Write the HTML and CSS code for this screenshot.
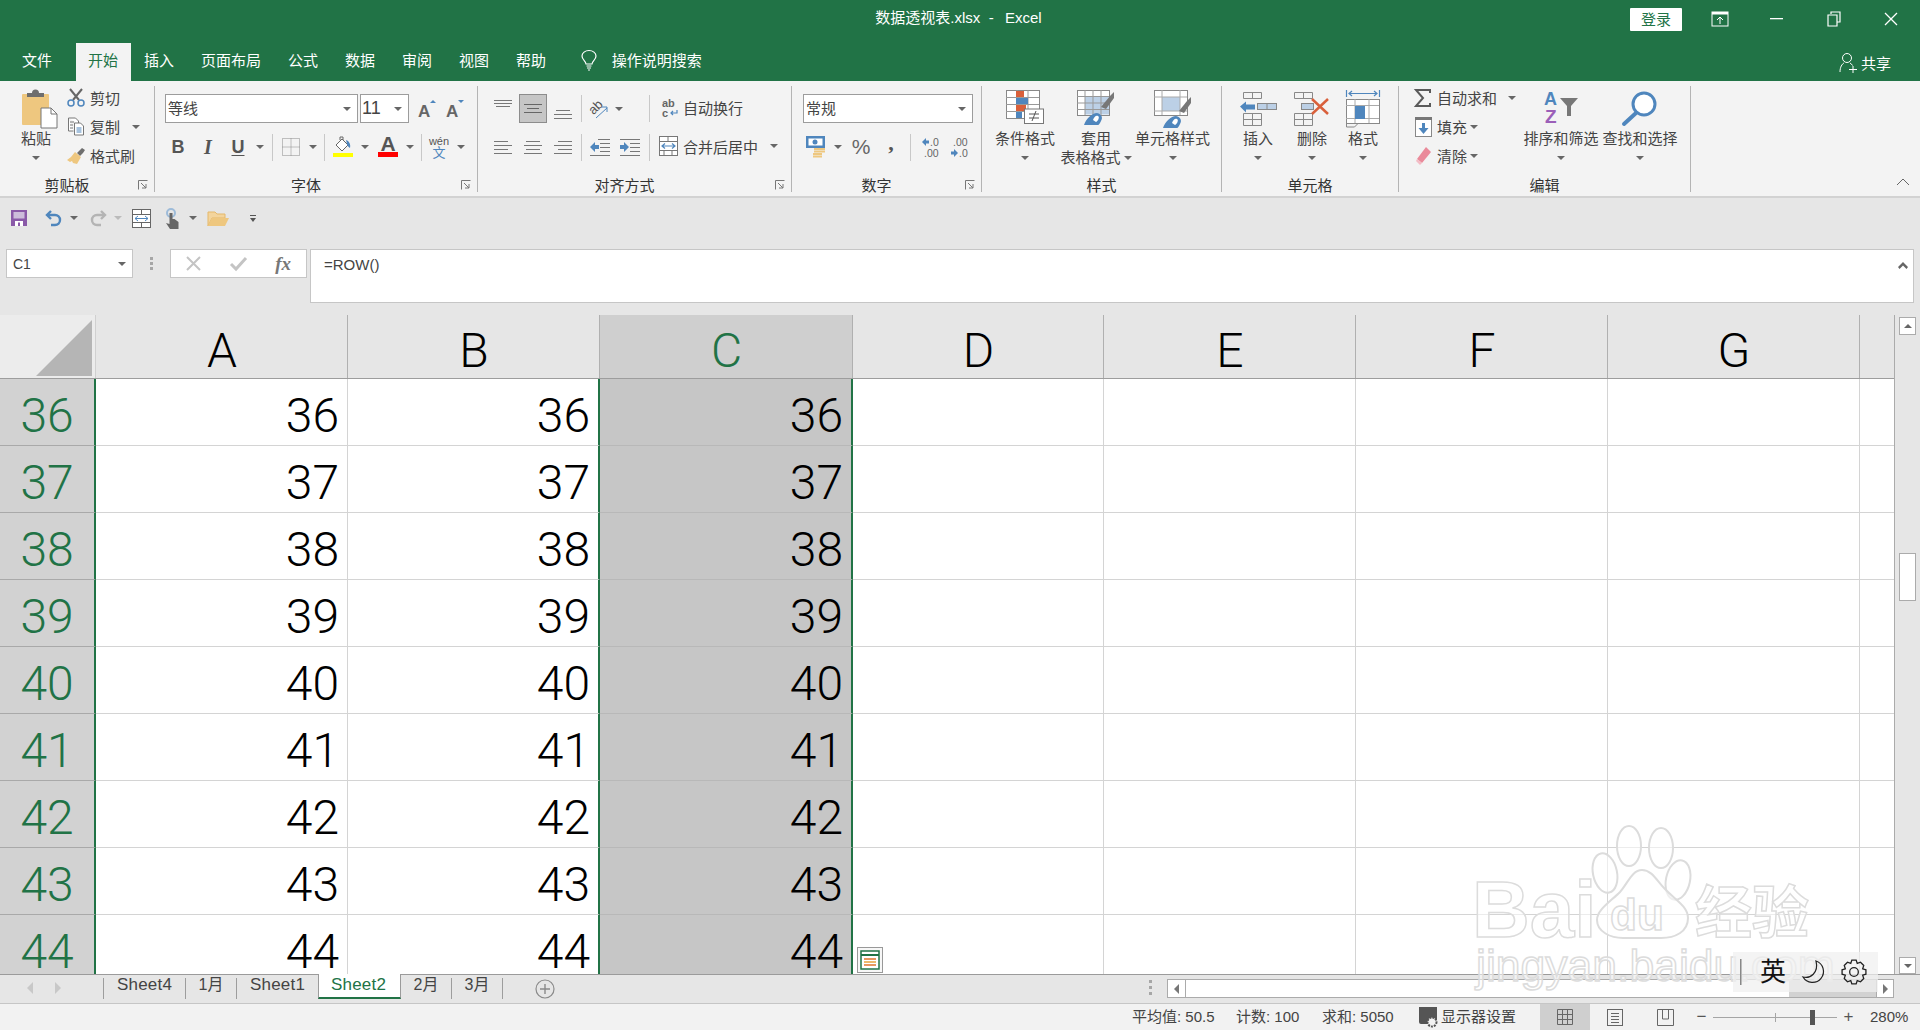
FILE: index.html
```html
<!DOCTYPE html>
<html lang="zh-CN">
<head>
<meta charset="utf-8">
<title>数据透视表.xlsx - Excel</title>
<link rel="stylesheet" href="styles.css">
</head>
<body>
<div class="app">
  <header class="titlebar">
    <div class="title">数据透视表.xlsx&nbsp; - &nbsp;&thinsp;Excel</div>
    <div class="winctl">
      <div class="login">登录</div>
      <div class="winbtn"><svg width="18" height="16"><rect x="1" y="1" width="16" height="14" fill="none" stroke="#fff"/><rect x="1" y="1" width="16" height="2.5" fill="#fff"/><path d="M9 13V6M6 9l3-3 3 3" fill="none" stroke="#fff"/></svg></div>
      <div class="winbtn"><svg width="14" height="4"><rect y="1" width="13" height="1.3" fill="#fff"/></svg></div>
      <div class="winbtn"><svg width="14" height="16"><path d="M4 3V1h9v10h-3M1 4h9v11H1z" fill="none" stroke="#fff" stroke-width="1.2"/></svg></div>
      <div class="winbtn"><svg width="14" height="14"><path d="M1 1l12 12M13 1L1 13" stroke="#fff" stroke-width="1.3"/></svg></div>
    </div>
  </header>
  <nav class="tabs">
    <div class="tab tab-file">文件</div>
    <div class="tab tab-active">开始</div>
    <div class="tab">插入</div>
    <div class="tab">页面布局</div>
    <div class="tab">公式</div>
    <div class="tab">数据</div>
    <div class="tab">审阅</div>
    <div class="tab">视图</div>
    <div class="tab">帮助</div>
    <div class="bulb"><svg width="16" height="21"><path d="M5 14c0-3-4-4-4-8a7 5.5 0 0 1 14 0c0 4-4 5-4 8z" fill="none" stroke="#fff" stroke-width="1.2"/><path d="M5.5 16h5M6 18h4M7 20h2" stroke="#fff"/></svg></div>
    <div class="tell">操作说明搜索</div>
    <div class="share"><svg width="19" height="21"><circle cx="8" cy="6" r="4.5" fill="none" stroke="#fff"/><path d="M1 20c0-5 2-8 4-9M11 11c1 .5 2 1.500 2.500 2.500M14 14v7M10 17.500h8" fill="none" stroke="#fff"/></svg><span>共享</span></div>
  </nav>

  <section class="ribbon">
    <!-- clipboard -->
    <div class="group g-clip">
      <div class="gbody">
        <div class="big w48 ml12">
          <div class="bigicon paste-ic"><svg width="34" height="38"><rect x="0" y="4" width="27" height="31" rx="1" fill="#eec77f"/><path d="M5 7V3h5a3 3 0 0 1 7 0h5v4z" fill="#6e6e6e"/><path d="M19 18h10l6 6v14H19z" fill="#fff" stroke="#777"/><path d="M29 18v6h6" fill="none" stroke="#777"/></svg></div>
          <div class="bt">粘贴</div>
          <div class="bt"><i class="caret"></i></div>
        </div>
        <div class="stack ml7">
          <div class="srow"><span class="sic"><svg width="18" height="19"><path d="M3 1l9 11M15 1L6 12" stroke="#666" stroke-width="2"/><circle cx="4" cy="15" r="3" fill="none" stroke="#4f86bd" stroke-width="1.500"/><circle cx="14" cy="15" r="3" fill="none" stroke="#4f86bd" stroke-width="1.500"/></svg></span>剪切</div>
          <div class="srow"><span class="sic"><svg width="18" height="19"><path d="M1.500 1h7l3 3v3M1.500 1v13h5" fill="#fff" stroke="#777"/><path d="M7.500 6h6l3 3v9h-9z" fill="#fff" stroke="#777"/><path d="M3 5h4M3 8h3M3 11h3" stroke="#777"/><path d="M9.500 11h5M9.500 13h5M9.500 15h5" stroke="#4f86bd"/></svg></span>复制<span class="c ml11"><i class="caret"></i></span></div>
          <div class="srow"><span class="sic"><svg width="18" height="16"><path d="M10 5l2-2 3-3 3 2-2 3-3 3z" fill="#6e6e6e"/><path d="M8 4l6 5-4 7-4-1-1-2-2 1-3-2 4-3z" fill="#eec77f"/></svg></span>格式刷</div>
        </div>
      </div>
      <div class="glabel"><span class="gt">剪贴板</span><span class="launch"><svg width="10" height="10"><path d="M.500 9.500V.500h9M3 3l5 5M8 4v4H4" fill="none" stroke="#777"/></svg></span></div>
    </div>
    <!-- font -->
    <div class="group g-font">
      <div class="gbody col">
        <div class="row1 pl10">
          <div class="combo w193"><span>等线</span><i class="caret"></i></div>
          <div class="combo w49 ml2"><span class="num">11</span><i class="caret"></i></div>
          <div class="cell w28 ml3"><svg width="22" height="22"><text x="3" y="19" class="glyph-a">A</text><path d="M15 5l3-3 3 3z" fill="#4f86bd"/></svg></div>
          <div class="cell w28"><svg width="22" height="22"><text x="3" y="19" class="glyph-a">A</text><path d="M15 2h6l-3 3z" fill="#4f86bd"/></svg></div>
        </div>
        <div class="row2 pl8">
          <div class="cell w30 fmt fb">B</div>
          <div class="cell w30 fmt fi">I</div>
          <div class="cell w30 fmt fu">U</div>
          <span class="c ml2"><i class="caret"></i></span>
          <i class="sep ml7"></i>
          <div class="cell w34 ml1"><svg width="18" height="18"><rect x=".5" y=".5" width="17" height="17" fill="none" stroke="#888" stroke-dasharray="1 1"/><path d="M9 .5v17M.5 9h17" stroke="#888" stroke-dasharray="1 1"/></svg></div>
          <span class="c"><i class="caret"></i></span>
          <i class="sep ml6"></i>
          <div class="cell w34 ml1"><svg width="20" height="20"><path d="M3 8l6-6 6 6-6 6z" fill="#fff" stroke="#666"/><path d="M7 3V0h3v3" fill="none" stroke="#666"/><path d="M13 3c3 1 5 4 4 8-2-1-3-3-3-4z" fill="#4f86bd"/><rect y="16" width="20" height="4" fill="#ff0"/></svg></div>
          <span class="c"><i class="caret"></i></span>
          <div class="cell w34 ml1"><svg width="20" height="22"><text x="2.500" y="15" class="glyph-b">A</text><rect y="16" width="20" height="5" fill="#f00"/></svg></div>
          <span class="c"><i class="caret"></i></span>
          <i class="sep ml6"></i>
          <div class="cell w34"><div class="wen"><span class="wen1">wén</span><span class="wen2">文</span></div></div>
          <span class="c"><i class="caret"></i></span>
        </div>
      </div>
      <div class="glabel"><span class="gt">字体</span><span class="launch"><svg width="10" height="10"><path d="M.500 9.500V.500h9M3 3l5 5M8 4v4H4" fill="none" stroke="#777"/></svg></span></div>
    </div>
    <!-- alignment -->
    <div class="group g-align">
      <div class="gbody col">
        <div class="row1 pl14">
          <div class="cell w22"><svg width="18" height="29"><path d="M0 6.500h18M0 9.500h18M2 12.500h14" stroke="#777"/></svg></div>
          <div class="btn-on ml5"><svg width="18" height="12"><path d="M0 1.500h18M3 5.500h12M0 9.500h18" stroke="#666"/></svg></div>
          <div class="cell w22 ml5"><svg width="18" height="29"><path d="M2 16.500h14M0 20.500h18M0 24.500h18" stroke="#777"/></svg></div>
          <i class="sep ml7"></i>
          <div class="cell w30 ml2"><svg width="20" height="20"><text x="1" y="12" class="glyph-ab" transform="rotate(-45 8 10)">ab</text><path d="M7 19l11-10M13 8h5v5" fill="none" stroke="#4f86bd" stroke-width="1" /></svg></div>
          <span class="c"><i class="caret"></i></span>
          <i class="sep ml25"></i>
          <div class="srow2 ml9"><span class="sic24"><svg width="20" height="20"><text x="3" y="9" class="glyph-wrap">ab</text><text x="3" y="19" class="glyph-wrap">c</text><path d="M18 12v3h-6M14 13l-2 2 2 2" fill="none" stroke="#4f86bd" stroke-width="1.200"/></svg></span>自动换行</div>
        </div>
        <div class="row2 pl14">
          <div class="cell w22"><svg width="18" height="14"><path d="M0 1.500h14M0 5.500h18M0 9.500h14M0 13.500h18" stroke="#777"/></svg></div>
          <div class="cell w22 ml8"><svg width="18" height="14"><path d="M2 1.500h14M0 5.500h18M2 9.500h14M0 13.500h18" stroke="#777"/></svg></div>
          <div class="cell w22 ml8"><svg width="18" height="14"><path d="M4 1.500h14M0 5.500h18M4 9.500h14M0 13.500h18" stroke="#777"/></svg></div>
          <i class="sep ml7"></i>
          <div class="cell w20 ml8"><svg width="20" height="18"><path d="M8 1.500h12M10 5.500h10M10 9.500h10M10 13.500h10M0 17.500h20" stroke="#777"/><path d="M0 9l5-5v3h4v4H5v3z" fill="#4f86bd"/></svg></div>
          <div class="cell w20 ml10"><svg width="20" height="18"><path d="M0 1.500h20M10 5.500h10M10 9.500h10M10 13.500h10M0 17.500h20" stroke="#777"/><path d="M9 9L4 4v3H0v4h4v3z" fill="#4f86bd"/></svg></div>
          <i class="sep ml9"></i>
          <div class="srow2 ml9"><span class="sic24"><svg width="19" height="20"><rect x=".5" y=".5" width="18" height="19" fill="#fff" stroke="#777"/><path d="M0 5.500h18M0 14.500h18M9 0v5M5 14v5M13 14v5" stroke="#777"/><path d="M3 10h13M6 7.500L3 10l3 2.500M13 7.500l3 2.500-3 2.500" fill="none" stroke="#4f86bd" stroke-width="1.200"/></svg></span>合并后居中<span class="c ml11"><i class="caret"></i></span></div>
        </div>
      </div>
      <div class="glabel"><span class="gt">对齐方式</span><span class="launch"><svg width="10" height="10"><path d="M.500 9.500V.500h9M3 3l5 5M8 4v4H4" fill="none" stroke="#777"/></svg></span></div>
    </div>
    <!-- number -->
    <div class="group g-num">
      <div class="gbody col">
        <div class="row1 pl11">
          <div class="combo w170"><span>常规</span><i class="caret"></i></div>
        </div>
        <div class="row2 pl11">
          <div class="cell w26"><svg width="20" height="23"><rect width="19" height="12" fill="#4f86bd"/><rect x="2.500" y="2.500" width="14" height="7" fill="#fff"/><circle cx="9" cy="6" r="2.500" fill="#4f86bd"/><path d="M8 13h11M8 15.500h11M7 18h9M7 20.500h9" stroke="#eec77f" stroke-width="2"/></svg></div>
          <span class="c ml4"><i class="caret"></i></span>
          <div class="cell w24 ml6 pct">%</div>
          <div class="cell w24 ml6 cma">,</div>
          <i class="sep ml7"></i>
          <div class="cell w32 ml3"><svg width="17" height="19"><path d="M0 4l4-4v2.500h3v3H4V8z" fill="#4f86bd"/><text x="8" y="8" class="glyph-dec">.0</text><text x="2" y="19" class="glyph-dec">.00</text></svg></div>
          <div class="cell w26"><svg width="17" height="19"><text x="2" y="8" class="glyph-dec">.00</text><path d="M7 15l-4-4v2.500H0v3h3V19z" fill="#4f86bd"/><text x="8" y="19" class="glyph-dec">.0</text></svg></div>
        </div>
      </div>
      <div class="glabel"><span class="gt">数字</span><span class="launch"><svg width="10" height="10"><path d="M.500 9.500V.500h9M3 3l5 5M8 4v4H4" fill="none" stroke="#777"/></svg></span></div>
    </div>
    <!-- styles -->
    <div class="group g-style">
      <div class="gbody">
        <div class="big w72 ml7">
          <div class="bigicon"><svg width="38" height="34"><rect x=".5" y=".5" width="33" height="28" fill="#fff" stroke="#888"/><path d="M11 0v28M22 0v28M0 7.500h33M0 14.500h33M0 21.500h33" stroke="#999"/><rect x="10" y="1" width="8" height="6" fill="#d9603b"/><rect x="10" y="8" width="12" height="6" fill="#4f86bd"/><rect x="10" y="15" width="10" height="6" fill="#d9603b"/><rect x="10" y="22" width="6" height="6" fill="#4f86bd"/><rect x="18.500" y="19" width="19" height="14.500" fill="#fff" stroke="#777"/><path d="M23 24h10M23 28h10M30 21l-4 10" stroke="#555"/></svg></div>
          <div class="bt">条件格式</div>
          <div class="bt"><i class="caret"></i></div>
        </div>
        <div class="big w70">
          <div class="bigicon"><svg width="38" height="35"><rect x=".5" y=".5" width="32" height="25" fill="#fff" stroke="#888"/><rect x="8" y="6.500" width="24" height="18" fill="#bcd0e6"/><path d="M8 0v25M16 0v25M24 0v25M0 6.500h32M0 13h32M0 19.500h32" stroke="#999"/><path d="M24 17l9-11 4-4v6l-8 11z" fill="#777"/><path d="M7 35c2-6 8-12 13-12 5 1 6 5 4 8-1 2-2 4-3 4z" fill="#4f86bd"/><path d="M16 30c1-3 3-5 5-4 2 1 0 5-2 6z" fill="#fff"/></svg></div>
          <div class="bt">套用</div>
          <div class="bt">表格格式<i class="caret ml3"></i></div>
        </div>
        <div class="big w83">
          <div class="bigicon"><svg width="38" height="38"><rect x=".5" y=".5" width="33" height="25" fill="#fff" stroke="#888"/><rect x="8" y="7" width="18" height="14" fill="#bcd0e6"/><path d="M0 7h33M0 21h33M8 0v25M26 0v25" stroke="#aaa"/><path d="M25 21l8-10 4-4v6l-7 10z" fill="#777"/><path d="M9 38c2-6 8-12 13-12 5 1 6 5 4 8-1 2-2 4-3 4z" fill="#4f86bd"/><path d="M18 33c1-3 3-5 5-4 2 1 0 5-2 6z" fill="#fff"/></svg></div>
          <div class="bt">单元格样式</div>
          <div class="bt"><i class="caret"></i></div>
        </div>
      </div>
      <div class="glabel"><span class="gt">样式</span></div>
    </div>
    <!-- cells -->
    <div class="group g-cells">
      <div class="gbody">
        <div class="big w56 ml8">
          <div class="bigicon"><svg width="37" height="36"><path d="M3.500 2.500h18v6h-18zM12.500 2.500v6M3.500 23.500h18v12h-18zM12.500 23.500v12M3.500 29.500h18" fill="none" stroke="#888"/><rect x="17.500" y="13.500" width="19" height="6" fill="#bcd0e6" stroke="#888"/><path d="M27 13v7" stroke="#888"/><path d="M0 16.500l6-5v3h9v5H6v3z" fill="#4f86bd"/></svg></div>
          <div class="bt">插入</div>
          <div class="bt"><i class="caret"></i></div>
        </div>
        <div class="big w52">
          <div class="bigicon"><svg width="36" height="36"><path d="M.500 2.500h18v6H.5zM9.500 2.500v6M.5 23.500h18v12H.5zM9.500 23.500v12M.5 29.500h18" fill="none" stroke="#888"/><rect x="7.500" y="13.500" width="12" height="6" fill="#bcd0e6" stroke="#888"/><path d="M18 9l16 15M34 9L18 24" stroke="#d9603b" stroke-width="2.500"/></svg></div>
          <div class="bt">删除</div>
          <div class="bt"><i class="caret"></i></div>
        </div>
        <div class="big w50">
          <div class="bigicon"><svg width="34" height="38"><path d="M.5 0v7M33.500 0v7M3 3.500h28M6 1L3 3.500 6 6M28 1l3 2.500L28 6" fill="none" stroke="#4f86bd" stroke-width="1.200"/><rect x=".5" y="9.500" width="33" height="24" fill="#fff" stroke="#888"/><path d="M9 9v24M23 9v24M0 15.500h33M0 28.500h33" stroke="#aaa"/><rect x="9" y="16" width="10" height="13" fill="#4f86bd"/><path d="M.5 33v4h8l3-3" fill="none" stroke="#888"/></svg></div>
          <div class="bt">格式</div>
          <div class="bt"><i class="caret"></i></div>
        </div>
      </div>
      <div class="glabel"><span class="gt">单元格</span></div>
    </div>
    <!-- editing -->
    <div class="group g-edit">
      <div class="gbody">
        <div class="stack w110 ml13">
          <div class="srow"><span class="sic25"><svg width="16" height="18"><path d="M15 4V1H1l7 8-7 8h14v-3" fill="none" stroke="#5a5a5a" stroke-width="2"/></svg></span>自动求和<span class="c ml10"><i class="caret"></i></span></div>
          <div class="srow"><span class="sic25"><svg width="17" height="20"><rect x=".5" y=".5" width="16" height="19" fill="#fff" stroke="#888"/><rect width="17" height="3" fill="#777"/><path d="M8.500 6v9" stroke="#4f86bd" stroke-width="3"/><path d="M3.500 11l5 6 5-6z" fill="#4f86bd"/></svg></span>填充<span class="c ml2"><i class="caret"></i></span></div>
          <div class="srow"><span class="sic25"><svg width="17" height="19"><path d="M11 1l5 5-9 11-5-4z" fill="#ea8a9a"/><path d="M2 13l5 4-2 2-4-4z" fill="#f3bcc5"/></svg></span>清除<span class="c ml2"><i class="caret"></i></span></div>
        </div>
        <div class="big w78">
          <div class="bigicon"><svg width="36" height="36"><text x="1" y="15" class="az-a">A</text><text x="2" y="33" class="az-z">Z</text><path d="M17 8h18l-7 8v10h-4V16z" fill="#777"/></svg></div>
          <div class="bt">排序和筛选</div>
          <div class="bt"><i class="caret"></i></div>
        </div>
        <div class="big w80">
          <div class="bigicon"><svg width="36" height="36"><circle cx="22" cy="14" r="11" fill="#fff" stroke="#4f86bd" stroke-width="3"/><path d="M14 23L2 34" stroke="#4f86bd" stroke-width="4" stroke-linecap="round"/></svg></div>
          <div class="bt">查找和选择</div>
          <div class="bt"><i class="caret"></i></div>
        </div>
      </div>
      <div class="glabel"><span class="gt">编辑</span></div>
    </div>
    <div class="rb-end"><svg width="14" height="8"><path d="M1 7l6-6 6 6" fill="none" stroke="#666"/></svg></div>
  </section>

  <section class="qat">
    <span class="q ml11"><svg width="16" height="16"><path d="M0 0h16v16H0z" fill="#8a5aa8"/><rect x="2.500" y="2" width="11" height="6.500" fill="#cdbddb"/><rect x="4" y="11" width="8" height="5" fill="#fff"/><rect x="7" y="12.500" width="2" height="3.500" fill="#8a5aa8"/></svg></span>
    <span class="q w20 ml17"><svg width="18" height="18"><path d="M6 2L2 6l4 4" fill="none" stroke="#4f86bd" stroke-width="2.400"/><path d="M3 6h7a5 5 0 0 1 0 10H6" fill="none" stroke="#4f86bd" stroke-width="2.400"/></svg></span>
    <span class="c ml5"><i class="caret"></i></span>
    <span class="q w20 ml9"><svg width="18" height="18"><path d="M12 2l4 4-4 4" fill="none" stroke="#b4b4b4" stroke-width="2.400"/><path d="M15 6H8a5 5 0 0 0 0 10h4" fill="none" stroke="#b4b4b4" stroke-width="2.400"/></svg></span>
    <span class="c ml5"><i class="caret caret-off"></i></span>
    <span class="q w19 ml9"><svg width="19" height="19"><rect x=".5" y=".5" width="18" height="18" fill="#fff" stroke="#666"/><path d="M0 5.500h18M0 13.500h18M9.500 0v5M9.500 14v5" stroke="#666"/><path d="M3 9.500h13M6 7L3 9.500 6 12M13 7l3 2.500-3 2.500" fill="none" stroke="#4f86bd"/></svg></span>
    <span class="q w16 ml13"><svg width="16" height="21"><circle cx="7" cy="5" r="4" fill="none" stroke="#9dbbd9" stroke-width="2"/><path d="M5.500 5h3v6h2l4 3v7H6l-4-6 3.500 1z" fill="#666"/></svg></span>
    <span class="c ml8"><i class="caret"></i></span>
    <span class="q w22 ml9"><svg width="22" height="16"><path d="M1 16V2h7l2 2h8v4H5z" fill="#f3d49c" stroke="#e5b86b"/><path d="M1 16l4-8h17l-4 8z" fill="#eec77f"/></svg></span>
    <span class="q w10 ml19"><svg width="8" height="9"><path d="M1 1.500h6" stroke="#555"/><path d="M1 4h6L4 8z" fill="#555"/></svg></span>
  </section>

  <section class="formula">
    <div class="namebox"><span>C1</span><i class="caret"></i></div>
    <div class="fdots"></div>
    <div class="fxbox">
      <svg width="15" height="15"><path d="M1 1l13 13M14 1L1 14" stroke="#c4c4c4" stroke-width="2"/></svg>
      <svg width="17" height="15"><path d="M1 8l5 5L16 2" fill="none" stroke="#c4c4c4" stroke-width="3"/></svg>
      <span class="fx">fx</span>
    </div>
    <div class="finput"><span class="ftext">=ROW()</span><svg width="10" height="7"><path d="M5 0l5 5-1.500 2L5 3.500 1.500 7 0 5z" fill="#666"/></svg></div>
  </section>

  <section class="sheet-wrap">
    <div class="sheet">
      <div class="sr hd">
        <div class="corner"><svg width="58" height="58"><path d="M57 1v56H1z" fill="#b5b5b5"/></svg></div>
        <div class="ch">A</div><div class="ch">B</div><div class="ch ch-sel">C</div><div class="ch">D</div><div class="ch">E</div><div class="ch">F</div><div class="ch">G</div><div class="ch"></div>
      </div>
      <div class="sr"><div class="rh">36</div><div class="ce">36</div><div class="ce pre">36</div><div class="ce se">36</div><div class="ce"></div><div class="ce"></div><div class="ce"></div><div class="ce"></div><div class="ce"></div></div>
      <div class="sr"><div class="rh">37</div><div class="ce">37</div><div class="ce pre">37</div><div class="ce se">37</div><div class="ce"></div><div class="ce"></div><div class="ce"></div><div class="ce"></div><div class="ce"></div></div>
      <div class="sr"><div class="rh">38</div><div class="ce">38</div><div class="ce pre">38</div><div class="ce se">38</div><div class="ce"></div><div class="ce"></div><div class="ce"></div><div class="ce"></div><div class="ce"></div></div>
      <div class="sr"><div class="rh">39</div><div class="ce">39</div><div class="ce pre">39</div><div class="ce se">39</div><div class="ce"></div><div class="ce"></div><div class="ce"></div><div class="ce"></div><div class="ce"></div></div>
      <div class="sr"><div class="rh">40</div><div class="ce">40</div><div class="ce pre">40</div><div class="ce se">40</div><div class="ce"></div><div class="ce"></div><div class="ce"></div><div class="ce"></div><div class="ce"></div></div>
      <div class="sr"><div class="rh">41</div><div class="ce">41</div><div class="ce pre">41</div><div class="ce se">41</div><div class="ce"></div><div class="ce"></div><div class="ce"></div><div class="ce"></div><div class="ce"></div></div>
      <div class="sr"><div class="rh">42</div><div class="ce">42</div><div class="ce pre">42</div><div class="ce se">42</div><div class="ce"></div><div class="ce"></div><div class="ce"></div><div class="ce"></div><div class="ce"></div></div>
      <div class="sr"><div class="rh">43</div><div class="ce">43</div><div class="ce pre">43</div><div class="ce se">43</div><div class="ce"></div><div class="ce"></div><div class="ce"></div><div class="ce"></div><div class="ce"></div></div>
      <div class="sr"><div class="rh">44</div><div class="ce">44</div><div class="ce pre">44</div><div class="ce se">44</div><div class="ce"></div><div class="ce"></div><div class="ce"></div><div class="ce"></div><div class="ce"></div></div>
      <div class="quick"><svg width="26" height="26"><rect x=".5" y=".5" width="25" height="25" fill="#f7f7f7" stroke="#999"/><rect x="4" y="4" width="18" height="18" fill="#fff" stroke="#217346" stroke-width="1.500"/><path d="M4 8h18" stroke="#217346" stroke-width="2"/><path d="M7 12h12" stroke="#e0752b" stroke-width="1.500"/><path d="M7 15h12" stroke="#e8a33d" stroke-width="1.500"/><path d="M7 18h12" stroke="#e0752b" stroke-width="1.500"/></svg></div>
    </div>
    <aside class="vscroll">
      <div class="vbtn"><i class="tri-up"></i></div>
      <div class="vthumb"></div>
      <div class="vbtn vbtn-end"><i class="caret"></i></div>
    </aside>
  </section>

  <section class="sheetbar">
    <div class="nav"><i class="tri-l"></i><i class="tri-r"></i></div>
    <i class="ssep"></i>
    <div class="stab">Sheet4</div><i class="ssep"></i>
    <div class="stab stab-m">1月</div><i class="ssep"></i>
    <div class="stab">Sheet1</div>
    <div class="stab stab-on">Sheet2</div>
    <div class="stab stab-m">2月</div><i class="ssep"></i>
    <div class="stab stab-m">3月</div><i class="ssep"></i>
    <div class="addsheet"><svg width="20" height="20"><circle cx="10" cy="10" r="9" fill="none" stroke="#8a8a8a" stroke-width="1.200"/><path d="M10 5v10M5 10h10" stroke="#8a8a8a" stroke-width="1.400"/></svg></div>
    <div class="hdots"></div>
    <div class="hscroll">
      <div class="hbtn"><i class="tri-l dark"></i></div>
      <div class="hthumb"></div>
      <div class="htrack"></div>
      <div class="hbtn hbtn-end"><i class="tri-r dark"></i></div>
    </div>
  </section>

  <footer class="status">
    <div class="st w104">平均值: 50.5</div>
    <div class="st w86">计数: 100</div>
    <div class="st w97">求和: 5050</div>
    <div class="st w121"><svg class="mon" width="19" height="22"><path d="M0 1h18v13h-7v4H2a2 2 0 0 1-2-2z" fill="#555"/><circle cx="13" cy="16" r="4.500" fill="#f2f2f2" stroke="#555" stroke-width="2" stroke-dasharray="2 1"/></svg>显示器设置</div>
    <div class="vw vw-on"><svg width="16" height="16"><path d="M.5.5h15v15H.5zM5.500 0v16M10.500 0v16M0 5.500h16M0 10.500h16" fill="none" stroke="#666"/></svg></div>
    <div class="vw"><svg width="16" height="17"><rect x=".5" y=".5" width="15" height="16" fill="none" stroke="#666"/><path d="M4 4.500h8M4 7.500h8M4 10.500h8M4 13.500h8" stroke="#666"/></svg></div>
    <div class="vw"><svg width="17" height="17"><path d="M.5.500h16v16H.5zM5.500 0v10h6V0" fill="none" stroke="#666"/></svg></div>
    <div class="zb">−</div>
    <div class="slider"><i class="tick"></i><i class="thumb"></i></div>
    <div class="zb">+</div>
    <div class="pctz">280%</div>
  </footer>

  <div class="watermark">
    <svg class="paw" width="110" height="115"><ellipse cx="37" cy="26" rx="12" ry="20" class="pw"/><ellipse cx="69" cy="28" rx="12" ry="20" class="pw"/><ellipse cx="13" cy="53" rx="12" ry="20" transform="rotate(-12 13 53)" class="pw"/><ellipse cx="86" cy="60" rx="12" ry="20" transform="rotate(12 86 60)" class="pw"/><path d="M50 50c-10 0-14 13-22 22-10 10-23 18-23 28 0 12 14 18 26 18h38c14 0 27-6 27-20 0-12-14-19-24-30-7-7-12-18-22-18z" class="pw"/></svg>
    <span class="wm-bai">Bai</span>
    <span class="wm-du">du</span>
    <span class="wm-jy">经验</span>
    <span class="wm-url">jingyan.baidu.com</span>
  </div>

  <div class="ime">
    <span class="ime-bar"></span>
    <span class="ime-txt">英</span>
    <svg width="26" height="26"><path d="M15 2a11 11 0 1 1-13 16c7 2 16-4 13-16z" fill="none" stroke="#222" stroke-width="1.200"/></svg>
    <svg width="26" height="26" viewBox="0 0 24 24"><path d="M10 1h4l1 3 3-1 3 3-1 3 3 1v4l-3 1 1 3-3 3-3-1-1 3h-4l-1-3-3 1-3-3 1-3-3-1v-4l3-1-1-3 3-3 3 1z" fill="none" stroke="#222" stroke-width="1.200"/><circle cx="12" cy="12" r="4" fill="none" stroke="#222" stroke-width="1.200"/></svg>
  </div>
</div>
</body>
</html>
```

FILE: styles.css
```css
* { box-sizing: border-box; }
html, body { margin: 0; padding: 0; background: #e6e6e6; }
body { font-family: "Liberation Sans", "Noto Sans CJK SC", sans-serif; font-size: 15px; color: #444; }
i { display: block; font-style: normal; }
svg { display: block; flex: none; overflow: visible; }

.app { position: relative; width: 1920px; height: 1030px; overflow: hidden; display: flex; flex-direction: column; background: #e6e6e6; }

/* title + tabs */
.titlebar { height: 43px; background: #217346; color: #fff; position: relative; display: flex; justify-content: flex-end; flex: none; }
.title { position: absolute; left: 0; right: 3px; top: 8px; text-align: center; line-height: 20px; color: #fff; }
.winctl { display: flex; align-items: flex-start; padding-right: 1px; }
.login { width: 52px; height: 23px; margin-top: 8px; margin-right: 9px; background: #fff; color: #217346; text-align: center; line-height: 23px; border-radius: 1px; }
.winbtn { width: 57px; height: 38px; display: flex; align-items: center; justify-content: center; }

.tabs { height: 38px; background: #217346; color: #fff; display: flex; align-items: stretch; flex: none; }
.tab { padding: 0 13.5px; line-height: 36px; }
.tab-file { margin-left: 8.5px; margin-right: 10px; }
.tab-active { background: #f3f3f3; color: #217346; padding: 0 12.5px; width: 55px; }
.bulb { width: 16px; margin-left: 21px; padding-top: 7px; }
.tell { margin-left: 15px; line-height: 36px; }
.share { margin-left: auto; padding-right: 29px; display: flex; align-items: center; gap: 3px; }

/* ribbon */
.ribbon { height: 117px; background: #f3f3f3; border-bottom: 2px solid #d2d2d2; display: flex; padding-top: 5px; flex: none; }
.group { height: 106px; border-right: 1px solid #b4b4b4; display: flex; flex-direction: column; flex: none; }
.g-clip { width: 155px; }
.g-font { width: 323px; }
.g-align { width: 314px; }
.g-num { width: 190px; }
.g-style { width: 240px; }
.g-cells { width: 177px; }
.g-edit { width: 292px; }
.gbody { flex: 1; display: flex; min-height: 0; }
.gbody.col { flex-direction: column; }
.glabel { height: 17px; display: flex; align-items: flex-start; }
.gt { flex: 1; text-align: center; line-height: 17px; color: #333; padding-top: 2px; }
.launch { width: 20px; padding-left: 4px; padding-top: 5px; }

.big { display: flex; flex-direction: column; align-items: center; flex: none; padding-top: 4px; }
.bigicon { height: 39px; display: flex; align-items: flex-start; justify-content: center; }
.paste-ic { margin-left: 6px; }
.bt { height: 20px; line-height: 20px; display: flex; align-items: center; justify-content: center; white-space: nowrap; }
.bt + .bt { margin-top: -1px; }

.stack { display: grid; grid-auto-rows: 29px; margin-top: -3px; align-content: start; flex: none; }
.srow { display: flex; align-items: center; white-space: nowrap; }
.srow2 { display: flex; align-items: center; white-space: nowrap; margin-top: -2px; }
.sic { width: 23px; }
.sic24 { width: 24px; }
.sic25 { width: 25px; padding-left: 3px; }

.row1 { height: 29px; margin-top: 8px; display: flex; align-items: center; }
.row2 { height: 30px; margin-top: 9px; display: flex; align-items: center; }
.combo { height: 29px; background: #fff; border: 1px solid #9c9c9c; display: flex; align-items: center; justify-content: space-between; padding: 0 6px 0 2px; line-height: 27px; }
.num { font-size: 18px; color: #444; font-weight: 400; margin-left: -1px; }
.cell { display: flex; align-items: center; justify-content: center; flex: none; }
.btn-on { width: 28px; height: 29px; background: #c6c6c6; border: 1px solid #8c8c8c; display: flex; align-items: center; justify-content: center; }
.sep { width: 1px; height: 27px; background: #c8c8c8; flex: none; }
.c { width: 10px; display: flex; justify-content: center; align-items: center; flex: none; }
.caret { width: 0; height: 0; border-left: 4.5px solid transparent; border-right: 4.5px solid transparent; border-top: 4.5px solid #666; }
.caret-off { border-top-color: #bbb; }

.fmt { font-size: 18px; color: #555; font-family: "Liberation Sans", sans-serif; }
.fb { font-weight: 700; }
.fi { font-style: italic; font-family: "Liberation Serif", serif; font-weight: 700; font-size: 20px; }
.fu { font-weight: 700; text-decoration: underline; text-underline-offset: 2px; }
.glyph-a { font: 700 17px "Liberation Sans", sans-serif; fill: #666; }
.glyph-b { font: 700 21px "Liberation Sans", sans-serif; fill: #555; }
.glyph-ab { font: 400 13px "Liberation Sans", sans-serif; fill: #555; }
.glyph-wrap { font: 700 11px "Liberation Sans", sans-serif; fill: #666; }
.glyph-dec { font: 400 10.5px/1 "Liberation Sans", sans-serif; fill: #666; }
.az-a { font: 700 18px "Liberation Sans", sans-serif; fill: #4f86bd; }
.az-z { font: 700 19px "Liberation Sans", sans-serif; fill: #9b5fb8; }
.wen { display: flex; flex-direction: column; align-items: center; line-height: 12px; }
.wen1 { font-size: 11px; color: #555; }
.wen2 { font-size: 13px; color: #4f86bd; }
.pct { font-size: 21px; color: #666; }
.cma { font-size: 22px; font-weight: 700; color: #555; padding-bottom: 9px; font-family: "Liberation Serif", serif; }
.rb-end { margin-left: auto; padding: 92px 10px 0 0; }

/* spacing + width helpers */
.ml1 { margin-left: 1px; } .ml2 { margin-left: 2px; } .ml3 { margin-left: 3px; } .ml4 { margin-left: 4px; } .ml5 { margin-left: 5px; }
.ml6 { margin-left: 6px; } .ml7 { margin-left: 7px; } .ml8 { margin-left: 8px; } .ml9 { margin-left: 9px; } .ml10 { margin-left: 10px; }
.ml11 { margin-left: 11px; } .ml12 { margin-left: 12px; } .ml13 { margin-left: 13px; } .ml14 { margin-left: 14px; } .ml17 { margin-left: 17px; }
.ml19 { margin-left: 19px; } .ml25 { margin-left: 25px; }
.pl8 { padding-left: 8px; } .pl10 { padding-left: 10px; } .pl11 { padding-left: 11px; } .pl14 { padding-left: 14px; }
.w19 { width: 19px; } .w20 { width: 20px; } .w22 { width: 22px; } .w24 { width: 24px; } .w26 { width: 26px; } .w28 { width: 28px; } .w30 { width: 30px; }
.w32 { width: 32px; } .w34 { width: 34px; } .w48 { width: 48px; } .w49 { width: 49px; } .w50 { width: 50px; } .w52 { width: 52px; } .w56 { width: 56px; }
.w70 { width: 70px; } .w72 { width: 72px; } .w78 { width: 78px; } .w80 { width: 80px; } .w83 { width: 83px; } .w110 { width: 110px; } .w170 { width: 170px; } .w193 { width: 193px; }
.w16 { width: 16px; } .w10 { width: 10px; } .w86 { width: 86px; } .w97 { width: 97px; } .w104 { width: 104px; } .w121 { width: 121px; }

/* qat */
.qat { height: 40px; display: flex; align-items: center; flex: none; }
.q { display: flex; justify-content: center; align-items: center; flex: none; }

/* formula */
.formula { display: flex; margin-top: 11px; height: 54px; flex: none; }
.namebox { width: 127px; margin-left: 6px; height: 29px; background: #fff; border: 1px solid #c6c6c6; display: flex; align-items: center; justify-content: space-between; padding: 0 6px 0 6px; font-size: 14px; color: #444; }
.fdots { width: 37px; height: 29px; display: flex; }
.fdots::before { content: ""; width: 3px; height: 3px; margin: 8px 0 0 17px; background: #a6a6a6; box-shadow: 0 5px 0 #a6a6a6, 0 10px 0 #a6a6a6; }
.fxbox { width: 137px; height: 29px; background: #fff; border: 1px solid #c6c6c6; display: flex; align-items: center; justify-content: space-between; padding: 0 15px; }
.fx { font: italic 700 19px "Liberation Serif", serif; color: #777; }
.finput { margin-left: 3px; width: 1604px; height: 54px; background: #fff; border: 1px solid #c6c6c6; display: flex; justify-content: space-between; padding: 6px 5px 0 13px; }
.ftext { font-size: 15px; color: #444; line-height: 18px; }
.finput svg { margin-top: 6px; }

/* sheet */
.sheet-wrap { margin-top: 12px; height: 659px; display: flex; flex: none; }
.sheet { width: 1895px; height: 659px; overflow: hidden; background: #fff; position: relative; border-right: 1px solid #ababab; flex: none; }
.sr { display: grid; grid-template-columns: 96px 252px 252px 253px 251px 252px 252px 252px 35px; height: 67px; }
.sr.hd { height: 64px; background: #e6e6e6; border-bottom: 1px solid #9d9d9d; }
.corner { background: #ececec; padding: 4px 0 0 35px; border-right: 1px solid #d0d0d0; }
.ch { font: 300 48px/52px "Roboto", "Liberation Sans", sans-serif; color: #000; display: flex; align-items: flex-end; justify-content: center; padding: 0 0 1px 1px; border-right: 1px solid #b0b0b0; }
.ch-sel { background: #cfcfcf; color: #217346; }
.rh { background: #d2d2d2; border-right: 2px solid #217346; border-bottom: 1px solid #a9a9a9; color: #217346; font: 300 48px/56px "Roboto", "Liberation Sans", sans-serif; display: flex; align-items: flex-end; justify-content: center; padding-bottom: 1px; }
.ce { border-right: 1px solid #d4d4d4; border-bottom: 1px solid #d4d4d4; font: 300 48px/56px "Roboto", "Liberation Sans", sans-serif; color: #000; display: flex; align-items: flex-end; justify-content: flex-end; padding-right: 8px; padding-bottom: 1px; }
.ce.pre { border-right: 2px solid #217346; padding-right: 8px; }
.ce.se { background: #c6c6c6; border-right: 2px solid #217346; border-bottom-color: #b8b8b8; padding-right: 8px; }
.quick { position: absolute; left: 857px; top: 632px; }

.vscroll { width: 25px; display: flex; flex-direction: column; padding: 2px 0 0 4px; flex: none; }
.vbtn { width: 17px; height: 18px; background: #fff; border: 1px solid #ababab; display: flex; align-items: center; justify-content: center; flex: none; }
.vbtn-end { margin-top: auto; height: 17px; }
.vthumb { width: 17px; height: 48px; margin-top: 218px; background: #fff; border: 1px solid #ababab; flex: none; }
.tri-up { width: 0; height: 0; border-left: 4.5px solid transparent; border-right: 4.5px solid transparent; border-bottom: 4.5px solid #666; }

.sheetbar { height: 30px; display: flex; align-items: flex-start; border-top: 1px solid #9b9b9b; border-bottom: 1px solid #c6c6c6; flex: none; position: relative; }
.nav { width: 103px; height: 25px; display: flex; align-items: center; gap: 22px; padding-left: 27px; }
.tri-l { width: 0; height: 0; border-top: 6px solid transparent; border-bottom: 6px solid transparent; border-right: 6px solid #c8c8c8; }
.tri-r { width: 0; height: 0; border-top: 6px solid transparent; border-bottom: 6px solid transparent; border-left: 6px solid #c8c8c8; }
.tri-l.dark { border-right-color: #777; border-top-width: 5px; border-bottom-width: 5px; border-right-width: 5px; }
.tri-r.dark { border-left-color: #777; border-top-width: 5px; border-bottom-width: 5px; border-left-width: 5px; }
.ssep { width: 1px; height: 21px; margin-top: 3px; background: #9d9d9d; flex: none; }
.stab { font-size: 17px; letter-spacing: .2px; padding: 0 13px; width: 81px; height: 21px; line-height: 20px; color: #444; flex: none; white-space: nowrap; }
.stab-m { font-size: 16px; letter-spacing: 0; width: 50px; padding: 0 12.5px; }
.stab-on { background: #fff; color: #217346; height: 25px; margin-top: -1px; border-left: 1px solid #9b9b9b; border-right: 1px solid #9b9b9b; border-bottom: 2px solid #217346; padding: 1px 13px 0 12px; width: 83px; }
.addsheet { margin-left: 32px; margin-top: 4px; }
.hdots { margin-left: auto; width: 3px; height: 16px; margin-top: 5px; margin-right: 15px; background: repeating-linear-gradient(#a6a6a6 0 3px, transparent 3px 6px); }
.hscroll { width: 727px; height: 19px; margin-top: 4px; margin-right: 26px; border: 1px solid #ababab; background: #d2d2d2; display: flex; }
.hbtn { width: 18px; background: #fff; display: flex; align-items: center; justify-content: center; border-right: 1px solid #ababab; flex: none; }
.hbtn-end { border-right: 0; border-left: 1px solid #ababab; width: 17px; }
.hthumb { width: 603px; background: #fff; flex: none; }
.htrack { flex: 1; }

.status { height: 26px; background: #f2f2f2; display: flex; justify-content: flex-end; align-items: stretch; flex: none; }
.st { display: flex; align-items: center; line-height: 26px; white-space: nowrap; color: #444; flex: none; }
.mon { margin-right: 3px; }
.vw { width: 50px; display: flex; align-items: center; justify-content: center; flex: none; }
.vw-on { background: #cfcfcf; }
.zb { width: 23px; text-align: center; font-size: 17px; line-height: 26px; color: #555; flex: none; }
.slider { width: 124px; position: relative; flex: none; }
.slider::before { content: ""; display: block; height: 1px; background: #a5a5a5; margin-top: 13px; }
.tick { position: absolute; left: 62px; top: 9px; width: 1px; height: 9px; background: #a5a5a5; }
.thumb { position: absolute; left: 97px; top: 6px; width: 5px; height: 15px; background: #555; }
.pctz { width: 60px; padding-left: 10px; line-height: 26px; flex: none; }

/* watermark and ime overlays */
.watermark { position: absolute; left: 1470px; top: 820px; width: 360px; height: 180px; }
.watermark span { position: absolute; color: rgba(255,255,255,.55); -webkit-text-stroke: 1.5px #dcdcdc; white-space: nowrap; }
.paw { position: absolute; left: 122px; top: 0; }
.pw { fill: rgba(255,255,255,.55); stroke: #dcdcdc; stroke-width: 2; }
.wm-bai { left: 2px; top: 45px; font: 700 80px/90px "Liberation Sans", sans-serif; }
.wm-du { left: 140px; top: 70px; font: 700 44px/50px "Liberation Sans", sans-serif; }
.wm-jy { left: 225px; top: 53px; font: 700 57px/70px "Noto Sans CJK SC", sans-serif; }
.wm-url { left: 6px; top: 120px; font: 400 44.5px/52px "Liberation Sans", sans-serif; }
.ime { position: absolute; left: 1733px; top: 952px; width: 145px; height: 40px; background: rgba(240,240,240,.72); display: flex; align-items: center; }
.ime-bar { width: 2px; height: 26px; margin-left: 7px; border-left: 1px solid #888; border-right: 1px solid #bbb; }
.ime-txt { width: 26px; margin-left: 18px; margin-right: 15px; font-size: 26px; line-height: 30px; color: #111; }
.ime svg { margin-right: 14px; }
```
